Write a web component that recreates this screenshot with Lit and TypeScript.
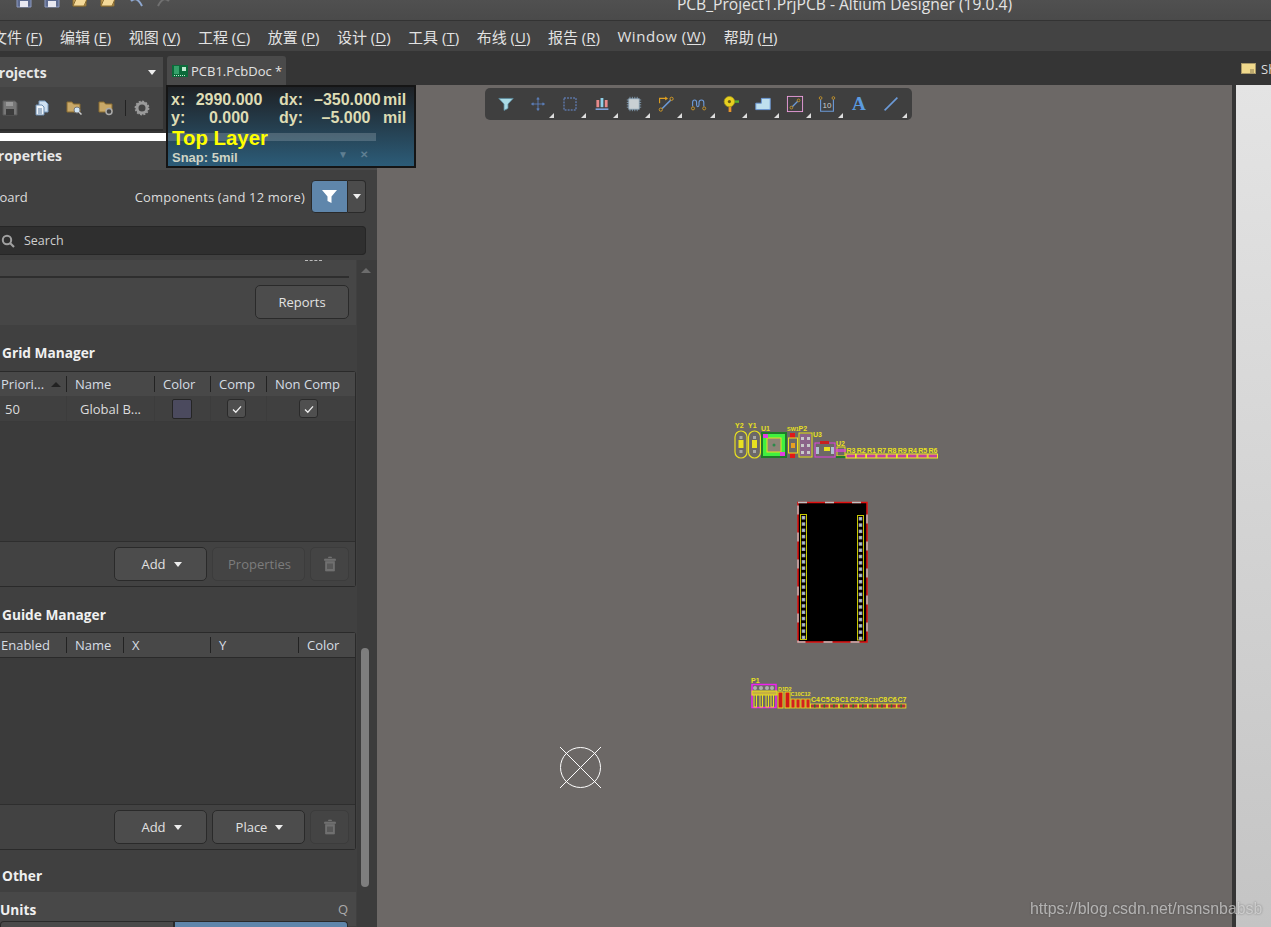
import { LitElement, html, css, svg, unsafeCSS } from "lit";
import { customElement } from "lit/decorators.js";

const FONT = unsafeCSS(`"Open Sans", "Noto Sans CJK SC", sans-serif`);

const floppy = () => svg`<svg class="ic16" viewBox="0 0 16 16"><path d="M1 1h12l2 2v12H1z" fill="#5d6a8e" stroke="#8d9ac0"/><rect x="4" y="1.500" width="7" height="5" fill="#8a94b8"/><rect x="4" y="9" width="8" height="6" fill="#e8e8f0"/></svg>`;
const folder = () => svg`<svg class="ic16" viewBox="0 0 16 16"><path d="M1 3h5l1.500 2H14v9H1z" fill="#caa45c" stroke="#8a6c30"/><path d="M1 14l3-7h11l-3 7z" fill="#f4d999" stroke="#8a6c30"/></svg>`;
const gear = () => svg`<svg class="ic16" viewBox="0 0 16 16"><circle cx="8" cy="8" r="5" fill="none" stroke="#9a9a9a" stroke-width="3"/><circle cx="8" cy="8" r="6.600" fill="none" stroke="#9a9a9a" stroke-width="1.600" stroke-dasharray="2 1.450"/></svg>`;
const trash = () => svg`<svg class="trash" viewBox="0 0 12 16"><path d="M4.500 2V1h3v1M0.500 3h11v1.500h-11zM1.500 5.500h9V15h-9z" fill="#707070" stroke="#707070" stroke-width=".7"/><path d="M4 7.500v5.500M6 7.500v5.500M8 7.500v5.500" stroke="#404040" stroke-width="1"/></svg>`;
const check = () => html`<span class="check"><svg viewBox="0 0 12 12"><path d="M2 6.500l2.800 2.700L10 3.400" fill="none" stroke="#eee" stroke-width="1.300"/></svg></span>`;

const toolIcons: { icon: unknown; corner: boolean }[] = [
  { corner: false, icon: svg`<path d="M1 3h18l-6.500 7v5.500l-5 2.500v-8z" fill="#a9dbe6" stroke="#5b8aa0" stroke-width="1"/>` },
  { corner: true, icon: svg`<path d="M10 2v16M2 10h16M10 2l-1.500 2h3zM10 18l-1.500-2h3zM2 10l2-1.500v3zM18 10l-2-1.500v3z" fill="none" stroke="#5f86c8" stroke-width="1"/>` },
  { corner: true, icon: svg`<rect x="2.500" y="2.500" width="15" height="15" fill="none" stroke="#6d94e0" stroke-width="1.200" stroke-dasharray="2.400 1.400"/>` },
  { corner: true, icon: svg`<rect x="3" y="5" width="3.500" height="9" fill="#e88a8a"/><rect x="8.200" y="2.500" width="3.500" height="11.500" fill="#8fd0e8"/><rect x="13.500" y="5" width="3.500" height="9" fill="#e88a8a"/><rect x="2" y="15.500" width="16" height="2" fill="#7ea3dc"/>` },
  { corner: true, icon: svg`<path d="M5 1v18M8 1v18M11 1v18M14 1v18M1 5h18M1 8h18M1 11h18M1 14h18" stroke="#8aa8c0" stroke-width="1"/><rect x="3.500" y="3.500" width="13" height="13" fill="#c9d0d4" stroke="#8ba4b8"/>` },
  { corner: true, icon: svg`<path d="M2 9V3h8" fill="none" stroke="#e0a020" stroke-width="1.400"/><path d="M9 .5l3.500 2.500L9 5.500z" fill="#e0a020"/><path d="M5 16L16 5" stroke="#6c9ad8" stroke-width="2"/><circle cx="3.500" cy="17" r="2" fill="#3f3f3f" stroke="#d09a28" stroke-width="1.200"/><circle cx="17" cy="3.500" r="2" fill="#3f3f3f" stroke="#d09a28" stroke-width="1.200"/>` },
  { corner: true, icon: svg`<path d="M2 13V8c0-4 5-4 5 0v3c0 3 3 3 3 0V8c0-4 6-4 6 0v5" fill="none" stroke="#6c9ad8" stroke-width="1.400"/><circle cx="2.500" cy="15.500" r="1.900" fill="#3f3f3f" stroke="#d09a28" stroke-width="1.100"/><circle cx="16.500" cy="15.500" r="1.900" fill="#3f3f3f" stroke="#d09a28" stroke-width="1.100"/>` },
  { corner: true, icon: svg`<rect x="12" y="5.500" width="8" height="3" fill="#58b030"/><rect x="7" y="13" width="3.400" height="7" fill="#e8962c"/><circle cx="8" cy="7" r="6.500" fill="#e8d020" stroke="#a89a18"/><circle cx="8" cy="7" r="2" fill="#6a5a10"/>` },
  { corner: true, icon: svg`<path d="M1 17V9h7V3h11v14z" fill="#bfe0ee" stroke="#6c9ad8" stroke-width="1.200"/>` },
  { corner: true, icon: svg`<rect x="0.500" y="0.500" width="19" height="19" fill="none" stroke="#f0a0e0" stroke-width="1.100"/><path d="M6 14l8-8" stroke="#6c9ad8" stroke-width="1.600"/><circle cx="5.500" cy="14.500" r="1.700" fill="#3f3f3f" stroke="#d09a28"/><circle cx="14.500" cy="5.500" r="1.700" fill="#3f3f3f" stroke="#d09a28"/>` },
  { corner: true, icon: svg`<path d="M2 4v15h16V4" fill="none" stroke="#6c9ad8" stroke-width="1.400"/><circle cx="2" cy="2.500" r="1.700" fill="#3f3f3f" stroke="#d09a28"/><circle cx="18" cy="2.500" r="1.700" fill="#3f3f3f" stroke="#d09a28"/><text x="10" y="15" class="tool-ten">10</text>` },
  { corner: false, icon: svg`<text x="10" y="18" class="tool-a">A</text>` },
  { corner: true, icon: svg`<path d="M2 18L18 2" stroke="#6c9ad8" stroke-width="2"/>` },
];

const padRows = (x: number, y0: number, step: number, n: number) =>
  Array.from({ length: n }, (_, i) => svg`<rect x="${x}" y="${y0 + i * step}" width="3.500" height="3.500" fill="#a89fb4"/><rect x="${x + 1}" y="${y0 + i * step + 1}" width="1.500" height="1.500" fill="#9adcdc"/>`);

const resistors = ["R3", "R2", "R1", "R7", "R8", "R9", "R4", "R5", "R6"];
const caps = ["C4", "C5", "C9", "C1", "C2", "C3", "C11", "C8", "C6", "C7"];

const pcb = () => svg`
<svg class="pcb" viewBox="377 85 855 842" width="855" height="842">
  <g class="lbl">
    <text x="735" y="428">Y2</text><text x="748" y="428">Y1</text><text x="761" y="431">U1</text>
    <text class="sm" x="787" y="431">SW1</text><text x="798.500" y="431">P2</text><text x="813" y="437">U3</text><text x="836" y="446">U2</text>
    <text x="751" y="683">P1</text><text class="sm" x="778" y="691">D1</text><text class="sm" x="784.500" y="691">D2</text><text class="sm" x="790.500" y="696">C10</text><text class="sm" x="800.500" y="696">C12</text>
    <text x="799.500" y="512">P4</text><text x="857" y="512">P3</text>
  </g>
  <g fill="none" stroke="#e8e020" stroke-width="1.200">
    <rect x="735" y="431" width="12" height="27" rx="6"/>
    <rect x="748.500" y="431" width="12" height="27" rx="6"/>
  </g>
  <rect x="738.500" y="440" width="5" height="8" fill="#e8e020"/><rect x="752" y="440" width="5" height="8" fill="#e8e020"/>
  <rect x="739.500" y="436" width="3" height="3" fill="#a8a8a8"/><rect x="739.500" y="450" width="3" height="3" fill="#a8a8a8"/>
  <rect x="753" y="436" width="3" height="3" fill="#a8a8a8"/><rect x="753" y="450" width="3" height="3" fill="#a8a8a8"/>
  <rect x="761" y="432" width="26" height="26" fill="#1f7a2a"/><rect x="763" y="434" width="22" height="22" fill="#40f040"/>
  <rect x="767" y="438" width="14" height="14" fill="#8c8478" stroke="#e8e020"/><rect x="763" y="434" width="5" height="4" fill="#e040e0"/><rect x="780" y="452" width="5" height="4" fill="#e040e0"/><circle cx="774" cy="445" r="1.500" fill="#2a8a4a"/>
  <rect x="790" y="433" width="5" height="5" fill="#e01818"/><rect x="790" y="453" width="5" height="5" fill="#e01818"/>
  <rect x="788.500" y="438" width="9" height="15" fill="none" stroke="#e8e020"/><rect x="791" y="443" width="4" height="5" fill="#e8a020"/>
  <rect x="799" y="433" width="13" height="24" fill="none" stroke="#e8e020"/><rect x="800" y="434" width="11" height="22" fill="#a060a0" opacity=".6"/>
  ${[437, 444, 451].map((y) => svg`<rect x="801" y="${y}" width="3" height="3" fill="#c8c8c8"/><rect x="807" y="${y}" width="3" height="3" fill="#c8c8c8"/>`)}
  <rect x="815" y="443" width="20" height="14" fill="none" stroke="#e040e0"/><rect x="824" y="447" width="6" height="4" fill="#e8e020"/><rect x="820" y="441" width="9" height="3" fill="#c82020"/><rect x="816" y="447" width="3" height="7" fill="#b0c0d0"/><rect x="831" y="447" width="3" height="7" fill="#b0c0d0"/>
  <rect x="837" y="447" width="8" height="9" fill="none" stroke="#e8e020"/><rect x="836" y="449" width="10" height="3" fill="#e040e0" opacity=".7"/><rect x="836" y="456" width="10" height="2" fill="#1f7a2a"/>
  ${resistors.map((r, i) => {
    const x = 846 + i * 10.25;
    return svg`<text class="lbl-t" x="${x + 0.5}" y="452.500">${r}</text><rect x="${x}" y="454" width="9.500" height="4" fill="#c040a0" stroke="#f0f020"/>`;
  })}
  <rect x="798" y="502.500" width="69" height="139.500" fill="#000" stroke="#e01010" stroke-width="1.500"/>
  <rect x="798" y="502.500" width="69" height="139.500" fill="none" stroke="#c0c0c0" stroke-width="1.500" stroke-dasharray="9 18"/>
  <rect x="800.500" y="514.500" width="6" height="125" fill="none" stroke="#c8c800"/><rect x="857.500" y="515.500" width="6" height="124.500" fill="none" stroke="#c8c800"/>
  ${padRows(801.75, 516, 6.3, 20)}${padRows(858.75, 517, 6.3, 20)}
  <rect x="752" y="684.500" width="24" height="23" fill="none" stroke="#f020f0" stroke-width="1.500"/>
  ${[755, 761, 767, 772].map((x) => svg`<circle cx="${x}" cy="688" r="2" fill="#b0b0b0"/><rect x="${x - 1}" y="693" width="2.500" height="14" fill="none" stroke="#e8e020"/>`)}
  <rect x="752" y="691" width="25" height="4" fill="#c8b040" stroke="#e8e020"/>
  <rect x="778" y="692" width="5" height="16" fill="#d01818" stroke="#e8e020"/><rect x="785" y="692" width="5" height="16" fill="#d01818" stroke="#e8e020"/>
  ${[791, 796, 801, 806].map((x) => svg`<rect x="${x}" y="699" width="4" height="9" fill="#d02020" stroke="#e8e020" stroke-width=".8"/>`)}
  ${caps.map((c, i) => {
    const x = 811 + i * 9.6;
    return svg`<text class="lbl-t ${c.length > 2 ? "sm" : ""}" x="${x}" y="702">${c}</text><rect x="${x - 0.5}" y="704" width="9" height="4" fill="#b03040" stroke="#f0f020" stroke-width=".8"/><rect x="${x + 3}" y="704.500" width="1.500" height="3" fill="#1f7a2a"/>`;
  })}
  <g stroke="#fff" stroke-width="1" fill="none"><circle cx="580.500" cy="767.500" r="20"/><path d="M560 747l41 41M601 747l-41 41"/></g>
</svg>`;

@customElement("app-root")
export class AppRoot extends LitElement {
  static styles = css`
    :host { display: block; width: 1271px; height: 927px; overflow: hidden; background: #353535; font-family: ${FONT}; color: #dcdcdc; font-size: 13px; }
    .app { display: flex; flex-direction: column; height: 927px; }
    .title { height: 20px; flex: none; background: linear-gradient(#505050, #4a4a4a); border-bottom: 1px solid #333; overflow: hidden; position: relative; display: flex; }
    .t-icons { display: flex; gap: 12px; margin: -8px 0 0 16px; height: 16px; }
    .ic16 { width: 16px; height: 16px; display: block; flex: none; }
    .t-text { margin: -5px 0 0 auto; padding-right: 259px; font-size: 15.600px; line-height: 18px; white-space: nowrap; color: #e4e4e4; }
    .menu { height: 30px; flex: none; background: #434343; display: flex; align-items: center; gap: 17.500px; font-size: 15px; white-space: nowrap; color: #e2e2e2; }
    .menu span:first-child { margin-left: -8px; }
    .menu .lat { letter-spacing: .55px; }
    .menu u { text-underline-offset: 2px; }
    .main { flex: 1; display: grid; grid-template-columns: 166px 211px 1fr; grid-template-rows: 34px 48px 1fr; position: relative; min-height: 0; }
    .projects { grid-column: 1; grid-row: 1 / 3; padding: 6px 3px 2px 0; display: flex; flex-direction: column; }
    .p-head { height: 30px; flex: none; background: #4a4a4a; display: flex; align-items: center; justify-content: space-between; font-weight: 700; font-size: 14px; padding-right: 7px; overflow: hidden; }
    .clip { margin-left: -10px; color: #e8e8e8; white-space: nowrap; }
    .caret { width: 0; height: 0; border-left: 4px solid transparent; border-right: 4px solid transparent; border-top: 5px solid #eee; flex: none; }
    .p-tools { flex: 1; background: #434343; display: flex; align-items: center; gap: 16px; padding-left: 2px; border-bottom: 2px solid #2c2c2c; }
    .p-tools i { width: 1px; height: 16px; background: #222; margin: 0 -8px 0 -5px; }
    .tabs { grid-column: 2 / 4; grid-row: 1; background: #353535; display: flex; align-items: flex-end; padding-left: 1px; position: relative; }
    .tab { width: 119px; height: 29px; background: #4a4a4a; border-radius: 3px 3px 0 0; display: flex; align-items: center; gap: 3px; padding-left: 5px; box-sizing: border-box; font-size: 13px; white-space: nowrap; color: #e2e2e2; }
    .tab svg { width: 16px; height: 12px; flex: none; }
    .side-tab { margin-left: auto; display: flex; align-items: center; gap: 5px; height: 33px; width: 30px; white-space: nowrap; overflow: hidden; flex: none; }
    .side-tab svg { width: 15px; height: 11px; flex: none; }
    .gap-fill { grid-column: 2; grid-row: 2; background: #353535; }
    .props { grid-column: 1 / 3; grid-row: 3; display: flex; flex-direction: column; min-height: 0; overflow: hidden; background: #404040; position: relative; }
    .white { height: 8px; flex: none; width: 167px; background: #fff; box-shadow: 210px 0 0 #353535; }
    .pr-head { height: 29px; flex: none; background: #4a4a4a; display: flex; align-items: center; font-weight: 700; font-size: 14px; }
    .pr-head span { margin-left: -11px; color: #e8e8e8; }
    .pr-body { width: 366px; flex: none; display: flex; flex-direction: column; position: relative; z-index: 1; }
    .filter { display: flex; align-items: center; height: 33px; margin-top: 10px; margin-bottom: 1px; white-space: nowrap; }
    .filter .b { margin-left: -9px; }
    .filter .c { margin-left: auto; margin-right: 6px; letter-spacing: .17px; }
    .f-btn { width: 37px; height: 33px; box-sizing: border-box; background: #5f86ab; border: 1px solid #2a2a2a; border-radius: 4px 0 0 4px; display: flex; align-items: center; justify-content: center; flex: none; }
    .f-btn svg { width: 15px; height: 15px; }
    .f-drop { width: 18px; height: 33px; box-sizing: border-box; background: #4c4c4c; border: 1px solid #2a2a2a; border-left: 0; border-radius: 0 4px 4px 0; display: flex; align-items: center; justify-content: center; flex: none; }
    .search { height: 29px; margin-top: 12px; box-sizing: border-box; background: #2f2f2f; border: 1px solid #262626; border-left: 0; border-radius: 0 4px 4px 0; display: flex; align-items: center; gap: 9px; padding-left: 1px; font-size: 12.500px; color: #cfcfcf; }
    .search svg { width: 14px; height: 14px; }
    .card { margin-top: 5px; width: 356px; height: 65px; background: #464646; position: relative; display: flex; flex-direction: column; }
    .dash { align-self: flex-end; margin-right: 34px; height: 2px; width: 17px; border-top: 1px dashed #bbb; }
    .rule { height: 2px; background: #2e2e2e; margin: 13px 7px 0 0; }
    .btn { box-sizing: border-box; height: 34px; background: #4c4c4c; border: 1px solid #2a2a2a; border-radius: 5px; display: flex; align-items: center; justify-content: center; gap: 8px; color: #e2e2e2; font-size: 13px; flex: none; }
    .card .btn { width: 94px; align-self: flex-end; margin: 7px 7px 0 0; }
    .sec { font-weight: 700; font-size: 13.700px; color: #f0f0f0; padding-left: 2px; line-height: 20px; }
    .sec.g { margin-top: 18px; }
    .sec.h { margin-top: 18px; }
    .sec.o { margin-top: 16px; }
    .table { width: 356px; box-sizing: border-box; border: 1px solid #2a2a2a; border-left: 0; margin-top: 8px; display: flex; flex-direction: column; border-radius: 0 3px 3px 0; }
    .t1 { height: 216px; }
    .t2 { height: 218px; margin-top: 7px; }
    .thead { height: 24px; flex: none; background: #484848; border-bottom: 1px solid #2a2a2a; display: grid; align-items: center; color: #d6dde4; white-space: nowrap; }
    .t1 .thead, .t1 .row { grid-template-columns: 66px 88px 56px 56px 1fr; }
    .t2 .thead { grid-template-columns: 66px 57px 87px 88px 1fr; }
    .thead > span { height: 16px; line-height: 16px; padding-left: 8px; border-left: 1px solid #222; display: flex; align-items: center; }
    .thead > span:first-child { border-left: 0; padding-left: 1px; justify-content: space-between; padding-right: 5px; }
    .up { width: 0; height: 0; border-left: 5px solid transparent; border-right: 5px solid transparent; border-bottom: 5px solid #222; }
    .row { height: 25px; flex: none; display: grid; align-items: stretch; border-bottom: 1px solid #3a3a3a; background: #404040; margin-top: -1px; }
    .row > div { display: flex; align-items: center; border-left: 1px solid #3c3c3c; justify-content: center; }
    .row > div:first-child { justify-content: flex-start; padding-left: 5px; border-left: 0; }
    .row > div.nm { justify-content: flex-start; padding-left: 13px; }
    .row > .cs { padding-right: 2px; }
    .row > .cc { padding-right: 4px; }
    .row > .cn { padding-right: 5px; }
    .swatch { width: 20px; height: 20px; box-sizing: border-box; background: #4b4a5e; border: 1px solid #252525; border-radius: 2px; }
    .check { width: 19px; height: 19px; box-sizing: border-box; background: #4f4f4f; border: 1px solid #2a2a2a; border-radius: 3px; display: flex; align-items: center; justify-content: center; }
    .check svg { width: 12px; height: 12px; }
    .tbody { flex: 1; background: #3b3b3b; }
    .tfoot { height: 45px; flex: none; box-sizing: border-box; background: #424242; border-top: 1px solid #2e2e2e; display: flex; align-items: center; justify-content: flex-end; gap: 5px; padding-right: 6px; }
    .tfoot .btn { width: 93px; padding-left: 2px; }
    .tfoot .btn.sq { width: 39px; padding-left: 0; }
    .btn.off { background: #444; border-color: #3c3c3c; color: #7c7c7c; }
    .trash { width: 12px; height: 16px; }
    .units { margin-top: 6px; width: 348px; padding-right: 8px; background: #484848; height: 34px; display: flex; flex-direction: column; }
    .u-row { display: flex; justify-content: space-between; align-items: center; font-weight: 700; font-size: 13.700px; height: 29px; padding-top: 5px; box-sizing: border-box; color: #f0f0f0; flex: none; }
    .u-row em { font: 400 13px ${FONT}; color: #aaa; margin-right: 0; }
    .seg { display: flex; height: 6px; flex: none; }
    .seg b { flex: 1; background: #4a4a4a; border: 1px solid #2a2a2a; border-bottom: 0; border-radius: 4px 0 0 0; }
    .seg b + b { background: #5f86ab; border-radius: 0 4px 0 0; }
    .scroll { position: absolute; right: 0; top: 127px; bottom: 0; width: 20px; background: #3c3c3c; }
    .arrow { position: absolute; left: 4px; top: 8px; width: 0; height: 0; border-left: 5px solid transparent; border-right: 5px solid transparent; border-bottom: 5px solid #6c6c6c; }
    .thumb { position: absolute; left: 4px; top: 388px; width: 8px; height: 239px; border-radius: 4px; background: #7e7e7e; }
    .work { grid-column: 3; grid-row: 2 / 4; display: flex; min-height: 0; }
    .canvas { flex: 1; background: #6c6866; position: relative; overflow: hidden; }
    .divider { width: 4px; background: #353535; flex: none; }
    .rpanel { width: 35px; flex: none; background: linear-gradient(#e4e4e4, #c4c4c4); }
    .pcb { position: absolute; left: 0; top: 0; }
    .lbl text, .lbl-t { font: 700 7px "Liberation Sans", sans-serif; fill: #e8e020; }
    .lbl text.sm, .lbl-t.sm { font-size: 5.500px; }
    .toolbar { position: absolute; left: 108px; top: 3px; width: 427px; height: 32px; box-sizing: border-box; background: #3f3f3f; border-radius: 5px; display: flex; padding-left: 5px; }
    .tool { width: 32.080px; height: 32px; flex: none; position: relative; display: flex; align-items: center; justify-content: center; }
    .tool svg { width: 16px; height: 16px; overflow: visible; }
    .tool.c::after { content: ""; position: absolute; right: 0; bottom: 2px; width: 0; height: 0; border-left: 5px solid transparent; border-bottom: 5px solid #ddd; }
    .tool-ten { font: 400 10px "Liberation Sans", sans-serif; fill: #ccc; text-anchor: middle; }
    .tool-a { font: 700 24px "Liberation Serif", serif; fill: #5b9be0; text-anchor: middle; }
    .hud { position: absolute; left: 166px; top: 34px; width: 250px; height: 83px; box-sizing: border-box; border: 2px solid #151515; background: linear-gradient(#1e2125, #2c5c78); font: 700 16px "Liberation Sans", sans-serif; color: #dedcb4; padding: 4px 0 0 3px; overflow: hidden; }
    .hud-grid { display: grid; grid-template-columns: 24px 68px 16px 35px 64px auto; line-height: 18px; white-space: nowrap; }
    .hud-grid .v { text-align: center; }
    .hud-grid .m { padding-left: 5px; }
    .hud-band { position: absolute; left: 0; top: 46px; width: 208px; height: 8px; background: rgba(255, 255, 255, .18); }
    .hud-layer { position: relative; font-size: 20.400px; line-height: 22px; color: #ffff00; margin: 0 0 0 1px; }
    .hud-snap { font-size: 13px; line-height: 14px; margin: 2px 0 0 1px; color: #d0d4c4; display: flex; }
    .hud-ctl { position: absolute; left: 170px; bottom: 6px; display: flex; gap: 12px; color: #5f7f92; font-size: 10px; line-height: 10px; align-items: center; }
    .wm { position: absolute; left: 1030px; bottom: 9px; font: 400 15.900px "Liberation Sans", sans-serif; color: rgba(235, 235, 235, .62); text-shadow: 0 0 2px rgba(40, 40, 40, .5); filter: blur(.4px); white-space: nowrap; }
  `;

  render() {
    const menu: [string, string][] = [["文件", "F"], ["编辑", "E"], ["视图", "V"], ["工程", "C"], ["放置", "P"], ["设计", "D"], ["工具", "T"], ["布线", "U"], ["报告", "R"], ["Window", "W"], ["帮助", "H"]];
    return html`
      <div class="app">
        <div class="title">
          <div class="t-icons">
            ${floppy()}${floppy()}${folder()}${folder()}
            <svg class="ic16" viewBox="0 0 16 16"><path d="M14 14C10 6 6 6 3 9" fill="none" stroke="#8fa8d0" stroke-width="2"/></svg>
            <svg class="ic16" viewBox="0 0 16 16"><path d="M2 14C6 6 10 6 13 9" fill="none" stroke="#707070" stroke-width="2"/></svg>
          </div>
          <div class="t-text">PCB_Project1.PrjPCB - Altium Designer (19.0.4)</div>
        </div>
        <div class="menu">
          ${menu.map(([n, k]) => html`<span class=${n === "Window" ? "lat" : ""}>${n} (<u>${k}</u>)</span>`)}
        </div>
        <div class="main">
          <div class="projects">
            <div class="p-head"><span class="clip">Projects</span><span class="caret"></span></div>
            <div class="p-tools">
              <svg class="ic16" viewBox="0 0 16 16"><path d="M1 1h12l2 2v12H1z" fill="#777" stroke="#5a5a5a"/><rect x="4" y="2" width="7" height="4" fill="#999"/><rect x="4" y="9" width="8" height="6" fill="#3c3c3c"/></svg>
              <svg class="ic16" viewBox="0 0 16 16"><path d="M5 1h6l3 3v8H5z" fill="#cfe0f0" stroke="#7a9cc0"/><path d="M2 5h6l2 2v8H2z" fill="#eef4fa" stroke="#6a8cb0"/><path d="M4 9h4M4 11h4M4 13h4" stroke="#5a7ca0"/></svg>
              <svg class="ic16" viewBox="0 0 16 16"><path d="M1 2h5l1.500 2H14v8H1z" fill="#c8a868" stroke="#8a6c30"/><circle cx="11" cy="10" r="3" fill="#cfe4f4" stroke="#777"/><path d="M13 12l2.500 2.500" stroke="#ccc" stroke-width="1.500"/></svg>
              <svg class="ic16" viewBox="0 0 16 16"><path d="M1 2h5l1.500 2H14v8H1z" fill="#c8a868" stroke="#8a6c30"/><circle cx="11" cy="11.500" r="3" fill="#444" stroke="#aaa" stroke-width="1.500"/></svg>
              <i></i>
              ${gear()}
            </div>
          </div>
          <div class="tabs">
            <div class="tab">
              <svg viewBox="0 0 16 12"><rect width="16" height="12" fill="#0c6a3a"/><path d="M2 2h5M2 4h5M2 6h5M2 8h5" stroke="#5fd89a"/><rect x="10" y="2" width="4" height="4" fill="#bfe8cf"/><path d="M2 10.500h12" stroke="#bfe8cf" stroke-dasharray="1 1"/></svg>
              PCB1.PcbDoc *
            </div>
            <div class="side-tab">
              <svg viewBox="0 0 15 11"><rect x=".5" y=".5" width="14" height="10" fill="#f0d98c" stroke="#a89868"/><path d="M9 7h4M9 9h4" stroke="#8a7a50"/></svg>
              Sh
            </div>
          </div>
          <div class="gap-fill"></div>
          <div class="props">
            <div class="white"></div>
            <div class="pr-head"><span>Properties</span></div>
            <div class="pr-body">
              <div class="filter">
                <span class="b">Board</span>
                <span class="c">Components (and 12 more)</span>
                <div class="f-btn"><svg viewBox="0 0 15 15"><path d="M0 1h15L9.500 7.500V14L5.500 12V7.500z" fill="#fff"/></svg></div>
                <div class="f-drop"><span class="caret"></span></div>
              </div>
              <div class="search">
                <svg viewBox="0 0 14 14"><circle cx="6" cy="6" r="4.200" fill="none" stroke="#a0a0a0" stroke-width="2"/><path d="M9 9l4 4" stroke="#a0a0a0" stroke-width="2.200"/></svg>
                Search
              </div>
              <div class="card">
                <div class="dash"></div>
                <div class="rule"></div>
                <div class="btn">Reports</div>
              </div>
              <div class="sec g">Grid Manager</div>
              <div class="table t1">
                <div class="thead"><span>Priori... <i class="up"></i></span><span>Name</span><span>Color</span><span>Comp</span><span>Non Comp</span></div>
                <div class="row"><div>50</div><div class="nm">Global B...</div><div class="cs"><span class="swatch"></span></div><div class="cc">${check()}</div><div class="cn">${check()}</div></div>
                <div class="tbody"></div>
                <div class="tfoot">
                  <div class="btn">Add <span class="caret"></span></div>
                  <div class="btn off">Properties</div>
                  <div class="btn off sq">${trash()}</div>
                </div>
              </div>
              <div class="sec h">Guide Manager</div>
              <div class="table t2">
                <div class="thead"><span>Enabled</span><span>Name</span><span>X</span><span>Y</span><span>Color</span></div>
                <div class="tbody"></div>
                <div class="tfoot">
                  <div class="btn">Add <span class="caret"></span></div>
                  <div class="btn">Place <span class="caret"></span></div>
                  <div class="btn off sq">${trash()}</div>
                </div>
              </div>
              <div class="sec o">Other</div>
              <div class="units">
                <div class="u-row"><span>Units</span><em>Q</em></div>
                <div class="seg"><b></b><b></b></div>
              </div>
            </div>
            <div class="scroll"><span class="arrow"></span><span class="thumb"></span></div>
          </div>
          <div class="work">
            <div class="canvas">
              ${pcb()}
              <div class="toolbar">
                ${toolIcons.map((t) => html`<div class="tool ${t.corner ? "c" : ""}"><svg viewBox="0 0 20 20">${t.icon}</svg></div>`)}
              </div>
            </div>
            <div class="divider"></div>
            <div class="rpanel"></div>
          </div>
          <div class="hud">
            <div class="hud-grid">
              <span>x:</span><span class="v">2990.000</span><span></span><span>dx:</span><span class="v">–350.000</span><span class="m">mil</span>
              <span>y:</span><span class="v">0.000</span><span></span><span>dy:</span><span class="v">–5.000</span><span class="m">mil</span>
            </div>
            <div class="hud-band"></div>
            <div class="hud-layer">Top Layer</div>
            <div class="hud-snap">Snap: 5mil</div>
            <div class="hud-ctl"><span>▼</span><span>✕</span></div>
          </div>
          <div class="wm">https://blog.csdn.net/nsnsnbabsb</div>
        </div>
      </div>`;
  }
}
